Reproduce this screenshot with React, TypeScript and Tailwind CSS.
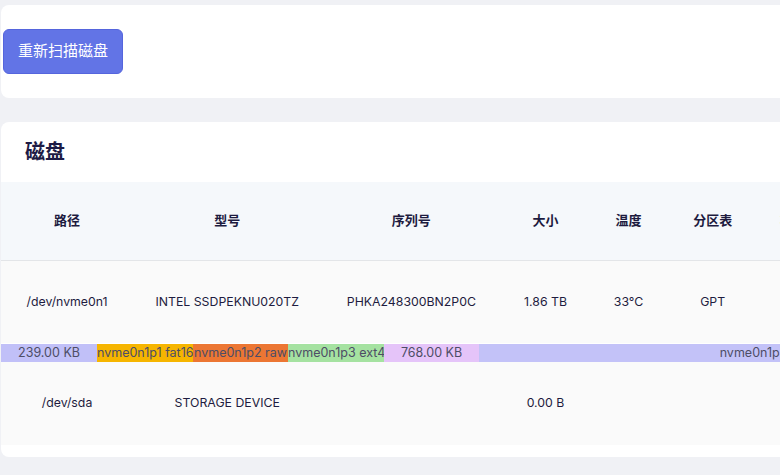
const columns = [
  { label: '路径', width: 'w-[132px]' },
  { label: '型号', width: 'w-[188px]' },
  { label: '序列号', width: 'w-[180px]' },
  { label: '大小', width: 'w-[88px]' },
  { label: '温度', width: 'w-[78px]' },
  { label: '分区表', width: 'w-[90px]' },
  { label: '状态', width: 'w-[70px]' },
  { label: '操作', width: 'w-[230px]' },
]

const partitions = [
  { label: '239.00 KB', color: 'bg-[#c1c0f8]', width: 'w-[96px]' },
  { label: 'nvme0n1p1 fat16', color: 'bg-[#f6b500]', width: 'w-[96px]' },
  { label: 'nvme0n1p2 raw', color: 'bg-[#ec7633]', width: 'w-[95px]' },
  { label: 'nvme0n1p3 ext4', color: 'bg-[#a5e2a1]', width: 'w-[96px]' },
  { label: '768.00 KB', color: 'bg-[#e5c4f9]', width: 'w-[95px]' },
  { label: 'nvme0n1p4 ext4', color: 'bg-[#c3c2f8]', width: 'flex-1' },
]

const disks = [
  { path: '/dev/nvme0n1', model: 'INTEL SSDPEKNU020TZ', serial: 'PHKA248300BN2P0C', size: '1.86 TB', temp: '33°C', table: 'GPT', status: '', bar: true },
  { path: '/dev/sda', model: 'STORAGE DEVICE', serial: '', size: '0.00 B', temp: '', table: '', status: '', bar: false },
]

function PartitionBar() {
  return (
    <div className="flex h-[18px] w-full text-[12.5px] leading-[18px] text-[#4d4d66]">
      {partitions.map((p) => (
        <div key={p.label} className={`${p.width} ${p.color} overflow-hidden whitespace-nowrap text-center`}>
          {p.label}
        </div>
      ))}
    </div>
  )
}

export default function App() {
  return (
    <div
      className="h-[475px] w-full overflow-hidden bg-[#f0f1f5]"
      style={{ fontFamily: 'Inter, "Noto Sans CJK SC", sans-serif' }}
    >
      <div className="flex w-[1058px] flex-col gap-6 pl-px pt-[5px]">
        <div className="rounded-lg bg-white py-6 pl-0.5">
          <button
            type="button"
            className="h-[45px] w-[120px] rounded-md border border-[#5565dd] bg-[#6274e6] text-[15px] text-white"
          >
            重新扫描磁盘
          </button>
        </div>

        <div className="rounded-lg bg-white pb-3">
          <h2 className="flex h-[60px] items-center px-6 text-[20px] font-bold text-[#1d1b45]">磁盘</h2>
          <table className="w-full table-fixed border-collapse text-[12.3px] text-[#1e1c40]">
            <thead>
              <tr className="h-[78px] border-b border-[#e3e5e8] bg-[#f5f8fb]">
                {columns.map((c) => (
                  <th key={c.label} className={`${c.width} text-center text-[13px] font-bold text-[#1d1b3f]`}>
                    {c.label}
                  </th>
                ))}
              </tr>
            </thead>
            <tbody>
              {disks.map((d) => (
                <>
                  <tr key={d.path} className="h-[83px] bg-[#fafafa]">
                    <td className="text-center">{d.path}</td>
                    <td className="text-center">{d.model}</td>
                    <td className="text-center">{d.serial}</td>
                    <td className="text-center">{d.size}</td>
                    <td className="text-center">{d.temp}</td>
                    <td className="text-center">{d.table}</td>
                    <td className="text-center">{d.status}</td>
                    <td className="text-center"></td>
                  </tr>
                  {d.bar && (
                    <tr key={d.path + '-bar'}>
                      <td colSpan={columns.length} className="p-0 pt-px">
                        <PartitionBar />
                      </td>
                    </tr>
                  )}
                </>
              ))}
            </tbody>
          </table>
        </div>
      </div>
    </div>
  )
}
